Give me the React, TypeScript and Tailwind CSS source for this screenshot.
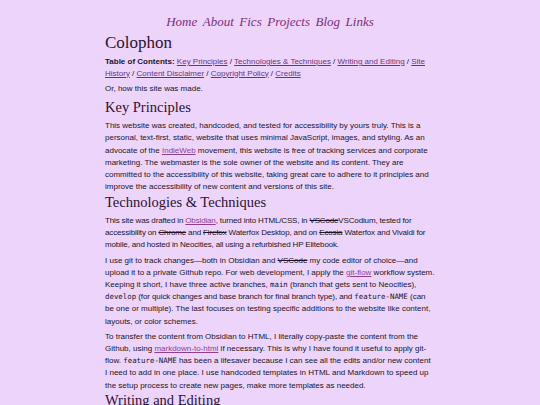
import React from "react";

const serif = "font-['Liberation_Serif',Georgia,serif]";
const mono = "font-['DejaVu_Sans_Mono',monospace] text-[7.4px]";

const A: React.FC<{ children: React.ReactNode; dark?: boolean }> = ({ children, dark }) => (
  <a href="#" className={`underline ${dark ? "text-[#6d3479]" : "text-[#8f3f92]"}`}>
    {children}
  </a>
);

const S: React.FC<{ children: React.ReactNode }> = ({ children }) => <s>{children}</s>;
const C: React.FC<{ children: React.ReactNode }> = ({ children }) => <code className={mono}>{children}</code>;

const H2: React.FC<{ children: React.ReactNode }> = ({ children }) => (
  <h2 className={`${serif} text-[14.5px] leading-[16px] text-[#2b1233] mt-[-2.5px] mb-[5px]`}>{children}</h2>
);

const P: React.FC<{ children: React.ReactNode; tight?: boolean }> = ({ children, tight }) => (
  <p className={tight ? "mb-[3px] tracking-[-0.15px]" : "mb-[3px]"}>{children}</p>
);

export default function App() {
  const nav = ["Home", "About", "Fics", "Projects", "Blog", "Links"];
  return (
    <div className="min-h-screen bg-[#edd4fb] text-[#22142a] font-['Liberation_Sans',Arial,sans-serif] text-[8px] leading-[12.2px]">
      <nav className={`${serif} italic text-[13px] leading-[18px] text-[#7c2f7c] flex justify-center gap-[5.5px] pt-[13px]`}>
        {nav.map((n) => (
          <a key={n} href="#">{n}</a>
        ))}
      </nav>
      <main className="w-[330px] mx-auto">
        <h1 className={`${serif} text-[17px] leading-[22px] text-[#2b1233] mt-[1px] mb-[2px]`}>Colophon</h1>
        <p className="mb-[3.5px] leading-[11.5px]">
          <b>Table of Contents:</b> <A dark>Key Principles</A> / <A dark>Technologies &amp; Techniques</A> /{" "}
          <A dark>Writing and Editing</A> / <A dark>Site History</A> / <A dark>Content Disclaimer</A> /{" "}
          <A dark>Copyright Policy</A> / <A dark>Credits</A>
        </p>
        <p className="mb-[7px]">Or, how this site was made.</p>

        <H2>Key Principles</H2>
        <P>
          This website was created, handcoded, and tested for accessibility by yours truly. This is a personal,
          text-first, static, website that uses minimal JavaScript, images, and styling. As an advocate of the{" "}
          <A>IndieWeb</A> movement, this website is free of tracking services and corporate marketing. The webmaster
          is the sole owner of the website and its content. They are committed to the accessibility of this website,
          taking great care to adhere to it principles and improve the accessibility of new content and versions of
          this site.
        </P>

        <H2>Technologies &amp; Techniques</H2>
        <P tight>
          This site was drafted in <A>Obsidian</A>, turned into HTML/CSS, in <S>VSCode</S>VSCodium, tested for
          accessibility on <S>Chrome</S> and <S>Firefox</S> Waterfox Desktop, and on <S>Ecosia</S> Waterfox and
          Vivaldi for mobile, and hosted in Neocities, all using a refurbished HP Elitebook.
        </P>
        <P>
          I use git to track changes—both in Obsidian and <S>VSCode</S> my code editor of choice—and upload it to a
          private Github repo. For web development, I apply the <A>git-flow</A> workflow system. Keeping it short, I
          have three active branches, <C>main</C> (branch that gets sent to Neocities), <C>develop</C>
          <span className="tracking-[-0.1px]"> (for quick changes and base branch for final branch type), and </span>
          <C>feature-NAME</C> (can be one or multiple). The last focuses on testing specific additions to the
          website like content, layouts, or color schemes.
        </P>
        <P>
          To transfer the content from Obsidian to HTML, I literally copy-paste the content from the Github, using{" "}
          <A>markdown-to-html</A> if necessary. This is why I have found it useful to apply git-flow.{" "}
          <C>feature-NAME</C> has been a lifesaver because I can see all the edits and/or new content I need to add
          in one place. I use handcoded templates in HTML and Markdown to speed up the setup process to create new
          pages, make more templates as needed.
        </P>

        <H2>Writing and Editing</H2>
        <P>
          Most of the content is written in Obsidian. All my content is in Markdown files. This helps me keep
          everything organized and easy to move around.
        </P>
      </main>
    </div>
  );
}
